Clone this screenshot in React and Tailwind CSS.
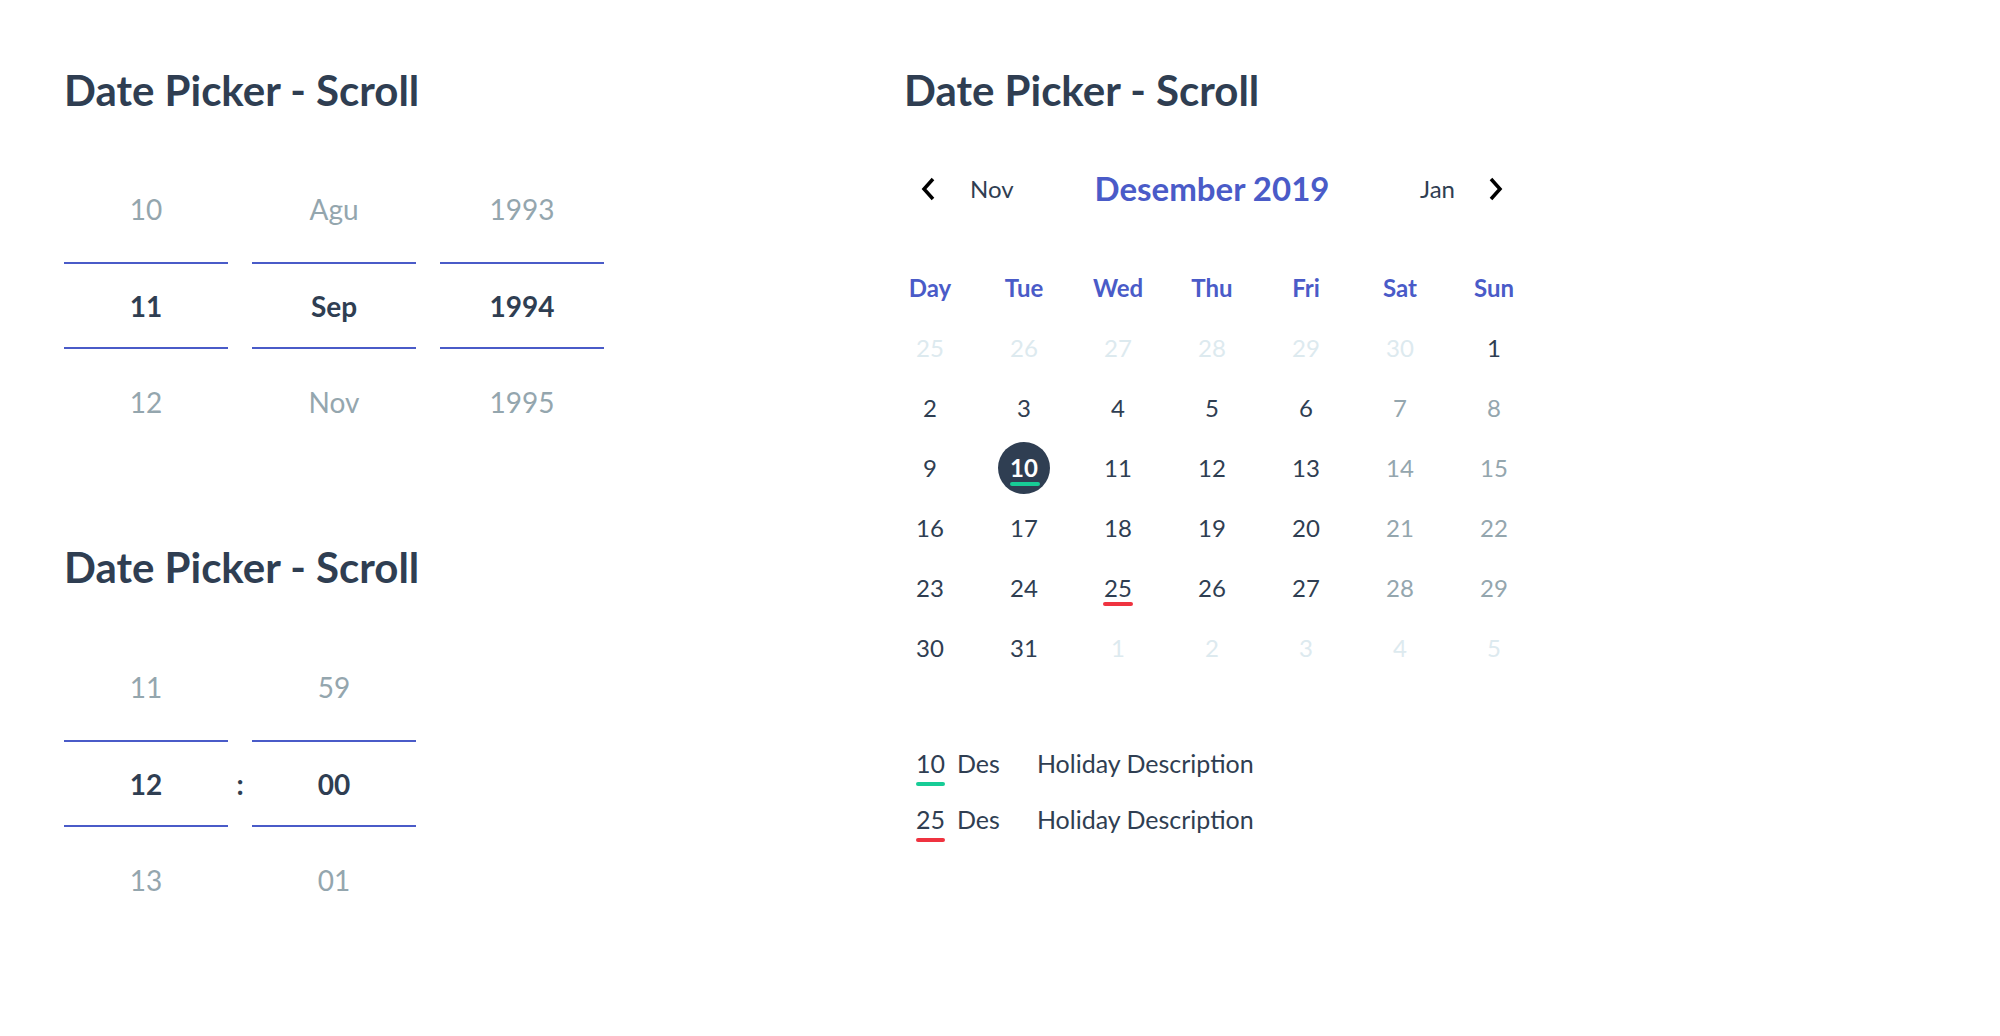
import React from 'react';

const dateColumns = [
  ['10', '11', '12'],
  ['Agu', 'Sep', 'Nov'],
  ['1993', '1994', '1995'],
];

const timeColumns = [
  ['11', '12', '13'],
  ['59', '00', '01'],
];

const weekdays = ['Day', 'Tue', 'Wed', 'Thu', 'Fri', 'Sat', 'Sun'];

// state: 'off' = other month, 'dim' = weekend, 'on' = normal
const days = [
  [25, 'off'], [26, 'off'], [27, 'off'], [28, 'off'], [29, 'off'], [30, 'off'], [1, 'on'],
  [2, 'on'], [3, 'on'], [4, 'on'], [5, 'on'], [6, 'on'], [7, 'dim'], [8, 'dim'],
  [9, 'on'], [10, 'selected'], [11, 'on'], [12, 'on'], [13, 'on'], [14, 'dim'], [15, 'dim'],
  [16, 'on'], [17, 'on'], [18, 'on'], [19, 'on'], [20, 'on'], [21, 'dim'], [22, 'dim'],
  [23, 'on'], [24, 'on'], [25, 'holiday'], [26, 'on'], [27, 'on'], [28, 'dim'], [29, 'dim'],
  [30, 'on'], [31, 'on'], [1, 'off'], [2, 'off'], [3, 'off'], [4, 'off'], [5, 'off'],
];

const holidays = [
  { day: '10', color: 'bg-[#17cc96]' },
  { day: '25', color: 'bg-[#ef3340]' },
];

const Title = () => (
  <h2 className="text-[42px] leading-[48px] font-bold text-[#2f3e52]">Date Picker - Scroll</h2>
);

const WheelColumn = ({ items }) => (
  <div className="w-[164px] flex flex-col text-[28px]">
    <div className="h-[106px] flex items-center justify-center text-[#94a6ae]">{items[0]}</div>
    <div className="h-[87px] flex items-center justify-center border-y-2 border-[#4a5bc8] font-bold text-[#2f3e52]">
      {items[1]}
    </div>
    <div className="h-[106px] flex items-center justify-center text-[#94a6ae]">{items[2]}</div>
  </div>
);

const Chevron = ({ right }) => (
  <svg width="15" height="24" viewBox="0 0 15 24" fill="none">
    <polyline
      points={right ? '3,2 12,12 3,22' : '12,2 3,12 12,22'}
      stroke="#000"
      strokeWidth="3.5"
      strokeLinejoin="miter"
    />
  </svg>
);

const DayCell = ({ value, state }) => {
  if (state === 'selected') {
    return (
      <div className="h-[60px] flex items-center justify-center">
        <div className="relative w-[52px] h-[52px] rounded-full bg-[#2f3e52] flex items-center justify-center text-white font-bold">
          {value}
          <span className="absolute left-[12px] top-[40px] w-[30px] h-[4px] rounded-full bg-[#17cc96]" />
        </div>
      </div>
    );
  }
  const color =
    state === 'off' ? 'text-[#ddeaef]' : state === 'dim' ? 'text-[#94a6ae]' : 'text-[#2f3e52]';
  return (
    <div className={`relative h-[60px] flex items-center justify-center ${color}`}>
      {value}
      {state === 'holiday' && (
        <span className="absolute left-[11px] top-[44px] w-[30px] h-[4px] rounded-full bg-[#ef3340]" />
      )}
    </div>
  );
};

export default function App() {
  return (
    <div className="min-h-screen bg-white font-['Lato','Liberation_Sans',sans-serif] flex">
      {/* Scroll pickers */}
      <div className="w-[904px] pl-[64px] pt-[66px]">
        <Title />
        <div className="mt-[42px] flex gap-[24px]">
          {dateColumns.map((col, i) => (
            <WheelColumn key={i} items={col} />
          ))}
        </div>

        <div className="mt-[88px]">
          <Title />
        </div>
        <div className="mt-[43px] flex">
          <WheelColumn items={timeColumns[0]} />
          <div className="w-[24px] flex flex-col text-[28px] font-bold text-[#2f3e52]">
            <div className="h-[106px]" />
            <div className="h-[87px] flex items-center justify-center">:</div>
          </div>
          <WheelColumn items={timeColumns[1]} />
        </div>
      </div>

      {/* Calendar */}
      <div className="pt-[66px]">
        <Title />

        <div className="mt-[50px] w-[616px] h-[48px] grid grid-cols-[1fr_auto_1fr] items-center">
          <div className="flex items-center">
            <span className="ml-[17px]"><Chevron /></span>
            <span className="ml-[34px] text-[24px] text-[#2f3e52]">Nov</span>
          </div>
          <div className="text-[33px] font-bold text-[#4a5bc8]">Desember 2019</div>
          <div className="flex items-center justify-end">
            <span className="mr-[33px] text-[24px] text-[#2f3e52]">Jan</span>
            <span className="mr-[17px]"><Chevron right /></span>
          </div>
        </div>

        <div className="mt-[52px] grid grid-cols-[repeat(7,52px)] gap-x-[42px] text-[24px]">
          {weekdays.map((d) => (
            <div key={d} className="h-[48px] flex items-center justify-center font-bold text-[#4a5bc8]">
              {d}
            </div>
          ))}
          <div className="col-span-7 h-[6px]" />
          {days.map(([v, s], i) => (
            <DayCell key={i} value={v} state={s} />
          ))}
        </div>

        <div className="mt-[66px] pl-[12px] flex flex-col gap-[16px] text-[25px] text-[#2f3e52]">
          {holidays.map((h) => (
            <div key={h.day} className="h-[40px] flex items-center">
              <span className="relative">
                {h.day}
                <span className={`absolute left-0 right-0 -bottom-[3px] h-[4px] rounded-full ${h.color}`} />
              </span>
              <span className="ml-[12px]">Des</span>
              <span className="ml-[37px]">Holiday Description</span>
            </div>
          ))}
        </div>
      </div>
    </div>
  );
}
